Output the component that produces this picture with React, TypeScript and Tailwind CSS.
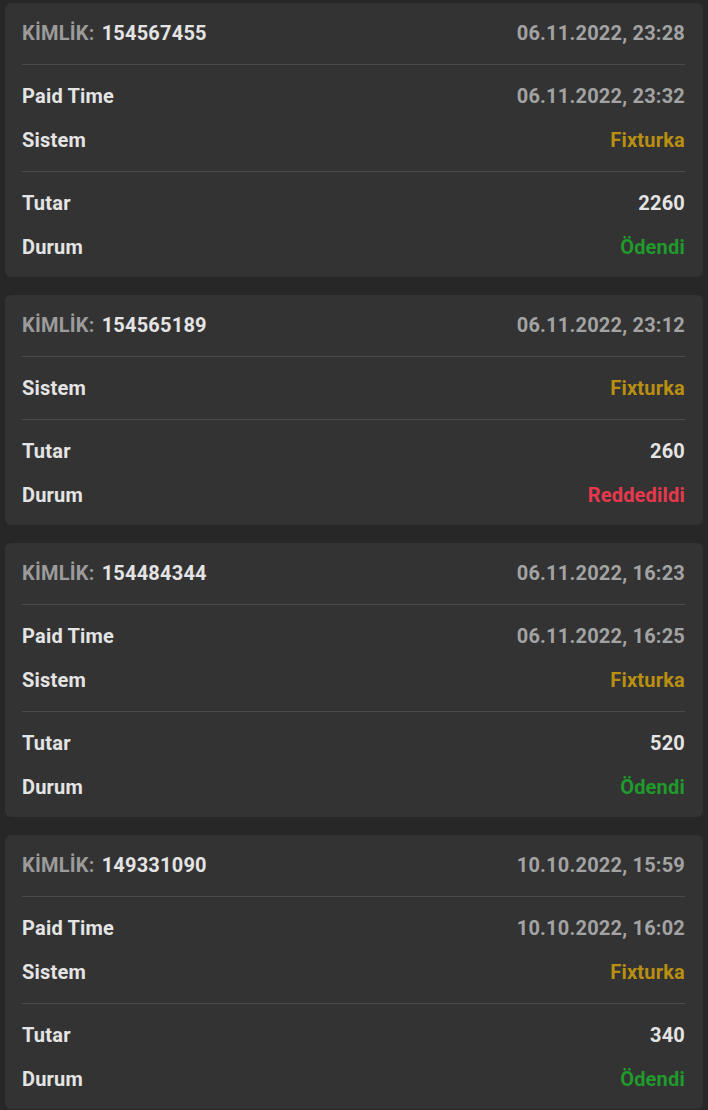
type Tx = {
  id: string;
  created: string;
  paid?: string;
  amount: string;
  status: "paid" | "rejected";
};

const transactions: Tx[] = [
  { id: "154567455", created: "06.11.2022, 23:28", paid: "06.11.2022, 23:32", amount: "2260", status: "paid" },
  { id: "154565189", created: "06.11.2022, 23:12", amount: "260", status: "rejected" },
  { id: "154484344", created: "06.11.2022, 16:23", paid: "06.11.2022, 16:25", amount: "520", status: "paid" },
  { id: "149331090", created: "10.10.2022, 15:59", paid: "10.10.2022, 16:02", amount: "340", status: "paid" },
];

function Row({ label, children }: { label: string; children: React.ReactNode }) {
  return (
    <div className="flex h-11 items-center justify-between">
      <span className="text-[#e4e4e4]">{label}</span>
      {children}
    </div>
  );
}

function Divider() {
  return <div className="my-[9px] h-px bg-[#4a4a4a]" />;
}

function TxCard({ tx }: { tx: Tx }) {
  return (
    <div className="rounded-md bg-[#333333] pl-[17px] pr-[18px] py-2">
      <div className="flex h-11 items-center justify-between">
        <span>
          <span className="text-[#9b9b9b]">KİMLİK:</span>{" "}
          <span className="ml-[2px] text-[#e4e4e4]">{tx.id}</span>
        </span>
        <span className="text-[#a3a3a3]">{tx.created}</span>
      </div>
      <Divider />
      {tx.paid && (
        <Row label="Paid Time">
          <span className="text-[#a3a3a3]">{tx.paid}</span>
        </Row>
      )}
      <Row label="Sistem">
        <span className="text-[#b88f10]">Fixturka</span>
      </Row>
      <Divider />
      <Row label="Tutar">
        <span className="text-[#e4e4e4]">{tx.amount}</span>
      </Row>
      <Row label="Durum">
        {tx.status === "paid" ? (
          <span className="text-[#1f9a2b]">Ödendi</span>
        ) : (
          <span className="text-[#e8384d]">Reddedildi</span>
        )}
      </Row>
    </div>
  );
}

export default function App() {
  return (
    <div
      className="min-h-screen bg-[#272727] px-[5px] pt-[3px] pb-4 text-[20px] font-bold tracking-[0.2px]"
      style={{ fontFamily: "Roboto, 'Noto Sans', sans-serif" }}
    >
      <div className="flex flex-col gap-[18px]">
        {transactions.map((tx) => (
          <TxCard key={tx.id} tx={tx} />
        ))}
      </div>
    </div>
  );
}
